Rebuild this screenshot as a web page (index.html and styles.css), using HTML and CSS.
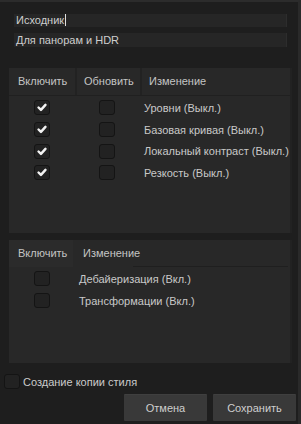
FILE: index.html
```html
<!DOCTYPE html>
<html lang="ru">
<head>
	<meta charset="UTF-8">
	<title>Создание стиля</title>
	<link rel="stylesheet" href="styles.css">
</head>
<body>
	<div class="win">
		<div class="fields">
			<div class="field f1">Исходник<span class="caret"></span></div>
			<div class="field f2">Для панорам и HDR</div>
		</div>

		<div class="panel p1">
			<div class="thead">
				<div class="th">Включить</div>
				<div class="th">Обновить</div>
				<div class="th th-last">Изменение</div>
			</div>
			<div class="rows">
				<div class="row">
					<span class="cell"><span class="cb on"><svg viewBox="0 0 15 15"><path d="M3.5 7.5 L6.3 10.3 L11.5 4.5"/></svg></span></span>
					<span class="cell"><span class="cb"></span></span>
					<span class="name">Уровни (Выкл.)</span>
				</div>
				<div class="row">
					<span class="cell"><span class="cb on"><svg viewBox="0 0 15 15"><path d="M3.5 7.5 L6.3 10.3 L11.5 4.5"/></svg></span></span>
					<span class="cell"><span class="cb"></span></span>
					<span class="name">Базовая кривая (Выкл.)</span>
				</div>
				<div class="row">
					<span class="cell"><span class="cb on"><svg viewBox="0 0 15 15"><path d="M3.5 7.5 L6.3 10.3 L11.5 4.5"/></svg></span></span>
					<span class="cell"><span class="cb"></span></span>
					<span class="name">Локальный контраст (Выкл.)</span>
				</div>
				<div class="row">
					<span class="cell"><span class="cb on"><svg viewBox="0 0 15 15"><path d="M3.5 7.5 L6.3 10.3 L11.5 4.5"/></svg></span></span>
					<span class="cell"><span class="cb"></span></span>
					<span class="name">Резкость (Выкл.)</span>
				</div>
			</div>
		</div>

		<div class="panel p2">
			<div class="thead">
				<div class="th th-on">Включить</div>
				<div class="th th-last">Изменение</div>
			</div>
			<div class="rows">
				<div class="row">
					<span class="cell"><span class="cb"></span></span>
					<span class="name">Дебайеризация (Вкл.)</span>
				</div>
				<div class="row">
					<span class="cell"><span class="cb"></span></span>
					<span class="name">Трансформации (Вкл.)</span>
				</div>
			</div>
		</div>

		<label class="copy"><span class="cb"></span>Создание копии стиля</label>

		<div class="btns">
			<button class="btn">Отмена</button>
			<button class="btn">Сохранить</button>
		</div>
	</div><!-- .win -->
</body>
</html>
```

FILE: styles.css
```css
html, body{ margin: 0; padding: 0; background: #1d1d1d;}
body{ font-family: "Liberation Sans", Arial, sans-serif; font-size: 11px; color: #c8c8c8;}
.win{ box-sizing: border-box; width: 301px; height: 424px; padding-top: 12px; border-top: 2px solid #2c2c2c; border-right: 3px solid #2a2a2a; background: #1e1e1e;}

.fields{ margin-left: 14px; width: 273px;}
.field{ box-sizing: border-box; padding-left: 2px; background: #262626; border-right: 1px solid #2d2d2d; color: #cecece;}
.f1{ height: 13px; line-height: 13px;}
.f2{ margin-top: 6px; height: 14px; line-height: 14px;}
.caret{ display: inline-block; width: 1px; height: 12px; margin-left: 1px; vertical-align: top; background: #e0e0e0;}

.panel{ margin-left: 9px; width: 281px; background: #282828; box-shadow: 2px 0 0 #222;}
.p1{ margin-top: 21px; height: 165px;}
.p2{ margin-top: 7px; height: 123px;}

.thead{ display: flex; height: 27px; border-bottom: 1px solid #202020;}
.p1 .thead{ gap: 2px; background: #222;}
.th{ height: 27px; line-height: 27px; background: #282828; color: #c4c4c4;}
.p1 .th:nth-child(1){ width: 66px; padding-left: 9px; box-sizing: border-box;}
.p1 .th:nth-child(2){ width: 63px; padding-left: 7px; box-sizing: border-box;}
.p1 .th-last{ flex: 1; padding-left: 7px;}
.p2 .thead{ border-bottom: 0;}
.p2 .th-on{ width: 64px; padding-left: 9px; box-sizing: border-box; background: #2b2b2b;}
.p2 .th-last{ flex: 1; padding-left: 10px; position: relative;}
.p2 .th-last:after{ content: ""; position: absolute; left: 60px; right: 2px; bottom: 0; height: 1px; background: #1f1f1f;}

.rows{ padding-top: 1px;}
.p2 .rows{ padding-top: 1px;}
.row{ display: flex; align-items: center; height: 21.7px;}
.cell{ display: flex; justify-content: center;}
.p1 .cell:nth-child(1){ width: 66px;}
.p1 .cell:nth-child(2){ width: 64px;}
.p1 .name{ padding-left: 5px;}
.p2 .cell{ width: 66px;}
.p2 .name{ padding-left: 4px;}

.cb{ box-sizing: border-box; display: inline-block; width: 16px; height: 15px; background: #222; border: 1px solid #141414; border-radius: 3px;}
.cb svg{ display: block; width: 14px; height: 13px;}
.cb path{ fill: none; stroke: #f2f2f2; stroke-width: 2.8; stroke-linecap: round; stroke-linejoin: round;}

.copy{ display: flex; align-items: center; gap: 3px; margin: 11px 0 0 4px; height: 15px; font-size: 11px; color: #cbcbcb;}

.btns{ display: flex; justify-content: flex-end; gap: 6px; margin-top: 6px; padding-right: 2px;}
.btn{ width: 83px; height: 26px; padding: 0; border: 0; border-radius: 1px; background: #393939; box-shadow: 0 -1px 0 #3f3f3f; font-family: "Liberation Sans", Arial, sans-serif; font-size: 11px; color: #cecece;}
```
